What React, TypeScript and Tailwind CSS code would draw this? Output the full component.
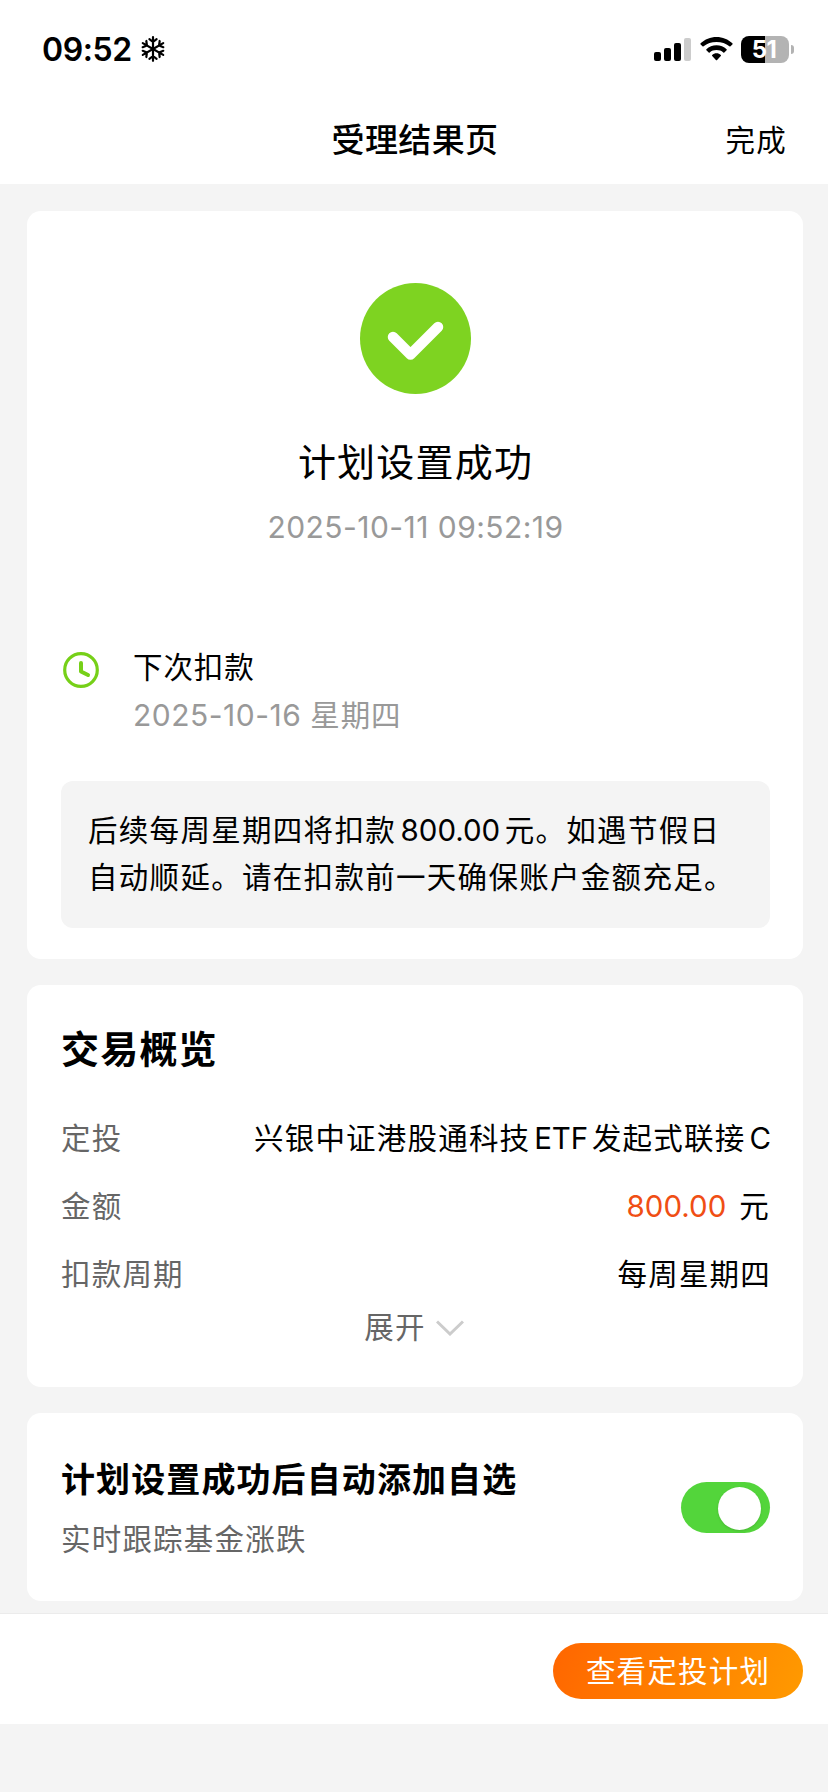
import { useState } from 'react';
import type { ReactNode } from 'react';
import clsx from 'clsx';

function Snowflake() {
  return (
    <svg width="24" height="26" viewBox="-12 -13 24 26" fill="none" stroke="#000" strokeWidth="2.2" strokeLinecap="round">
      {[0, 60, 120, 180, 240, 300].map((deg) => (
        <g key={deg} transform={`rotate(${deg})`}>
          <path d="M0 0V-11.8M0 -7L-3.6 -9.800M0 -7L3.6 -9.800" />
        </g>
      ))}
    </svg>
  );
}

function StatusBar() {
  return (
    <div className="flex h-24 items-start justify-between pr-[34px] pl-[42px]">
      <div className="flex pt-[30px]">
        <span className="w-[99px] text-[32px] leading-10 font-semibold tracking-[-0.4px]">09:52</span>
        <div className="pt-[6px]">
          <Snowflake />
        </div>
      </div>
      <div className="flex items-start pt-9">
        <svg className="mt-[2px]" width="37" height="23" viewBox="0 0 37 23">
          <rect x="0" y="14" width="7" height="9" rx="2" />
          <rect x="10" y="10" width="7" height="13" rx="2" />
          <rect x="20" y="5" width="7" height="18" rx="2" />
          <rect x="30" y="0" width="7" height="23" rx="2" fill="#ccc" />
        </svg>
        <svg className="mt-[1px] ml-[9px]" width="33" height="24" viewBox="0 0 33 24">
          <path d="M16.5 0C10.4 0 4.8 2.4 .6 6.3c-.3.3-.3.8 0 1.1l1.9 1.9c.3.3.8.3 1.1 0C7 6.200 11.500 4.900 16.500 4.900S26 6.200 29.400 9.300c.3.3.8.3 1.100 0l1.900-1.900c.3-.3.3-.8 0-1.100C28.200 2.400 22.600 0 16.500 0z" />
          <path d="M16.500 8.300c-3.900 0-7.400 1.500-10.100 3.900-.3.3-.3.8 0 1.100l2.300 2.200c.3.3.7.3 1 0 1.900-1.700 4.100-2.400 6.800-2.400s4.900.7 6.800 2.400c.3.3.7.3 1 0l2.300-2.200c.3-.3.3-.8 0-1.100-2.700-2.400-6.200-3.900-10.100-3.900z" />
          <path d="M16.500 16.300c-1.700 0-3.200.6-4.300 1.600-.3.3-.3.7 0 1l3.700 4c.3.4.9.4 1.200 0l3.700-4c.3-.3.3-.7 0-1-1.100-1-2.600-1.600-4.300-1.600z" />
        </svg>
        <div className="ml-2 flex h-[27px] w-12 items-center justify-center rounded-[8px] bg-linear-to-r from-black from-50% to-[#b3b3b3] to-50% pr-[2px] text-[24px] leading-none font-bold tracking-[-0.5px] text-white">
          51
        </div>
        <div className="mt-[9px] ml-[2px] h-[9px] w-[3px] rounded-r-full bg-[#b3b3b3]" />
      </div>
    </div>
  );
}

function Row({ label, children }: { label: string; children: ReactNode }) {
  return (
    <div className="flex h-[68px] items-center justify-between">
      <span className="text-[#666]">{label}</span>
      <span>{children}</span>
    </div>
  );
}

export default function App() {
  const [watch, setWatch] = useState(true);

  return (
    <div className="flex h-[1792px] w-[828px] flex-col bg-[#f4f4f4] font-[Inter,'Noto_Sans_CJK_SC',sans-serif] text-[29.5px] tracking-[1.2px] whitespace-nowrap text-black">
      <header className="h-[184px] bg-white">
        <StatusBar />
        <div className="grid h-[90px] grid-cols-3 items-center">
          <h1 className="col-start-2 pl-[2px] text-center text-[33px] font-medium tracking-[0.4px]">受理结果页</h1>
          <button className="mb-[2px] justify-self-end pr-[41px]">完成</button>
        </div>
      </header>

      <main className="pt-[27px] pr-[25px] pl-[27px]">
        {/* Result */}
        <section className="h-[748px] rounded-[14px] bg-white pt-[72px] pr-[33px] pl-[34px]">
          <svg className="mx-auto" width="111" height="111" viewBox="0 0 111 111" fill="none">
            <circle cx="55.5" cy="55.5" r="55.5" fill="#7ed321" />
            <path d="M33 54L50.5 71.5L78 44" stroke="#fff" strokeWidth="10.5" strokeLinecap="round" strokeLinejoin="round" />
          </svg>
          <h2 className="mt-[38px] text-center text-[38px] leading-[60px] tracking-[1.2px]">计划设置成功</h2>
          <p className="mt-[13px] text-center text-[30px] leading-[44px] tracking-[0.45px] text-[#999]">2025-10-11 09:52:19</p>

          <div className="mt-[94px] flex">
            <svg className="mt-[9px] ml-[2px]" width="36" height="36" viewBox="0 0 36 36" fill="none" stroke="#76d018" strokeWidth="3.2">
              <circle cx="18" cy="18" r="16.3" />
              <path d="M18 11v8.500l7 3.500" strokeWidth="4" strokeLinecap="round" strokeLinejoin="round" />
            </svg>
            <div className="ml-[34px] leading-[48px] tracking-[0.9px]">
              <p>下次扣款</p>
              <p className="text-[#999]">
                <span className="text-[30px] tracking-[0.5px]">2025-10-16 </span>星期四
              </p>
            </div>
          </div>

          <div className="mt-[42px] h-[147px] rounded-[12px] bg-[#f4f4f4] px-[27px] pt-[26px] leading-[47px] tracking-[1.3px]">
            <p>
              后续每周星期四将扣款<span className="mx-[4.5px] tracking-normal">800.00</span>元。如遇节假日
            </p>
            <p>自动顺延。请在扣款前一天确保账户金额充足。</p>
          </div>
        </section>

        {/* Overview */}
        <section className="mt-[26px] h-[402px] rounded-[14px] bg-white pt-[34px] pr-[33px] pl-[34px]">
          <h3 className="text-[38px] leading-[60px] font-bold tracking-[1.2px]">交易概览</h3>
          <div className="mt-[25px]">
            <Row label="定投">
              兴银中证港股通科技<span className="mx-1 tracking-[-0.2px]">ETF</span>发起式联接<span className="ml-1 tracking-[-1px]">C</span>
            </Row>
            <Row label="金额">
              <span className="mr-[13px] tracking-normal text-[#f04e14]">800.00</span>元
            </Row>
            <Row label="扣款周期">
              <span className="-mr-px">每周星期四</span>
            </Row>
          </div>
          <button className="mx-auto flex h-[38px] items-center pr-[3px] text-[#666]">
            展开
            <svg className="mt-[2px] ml-[10px]" width="28" height="16" viewBox="0 0 28 16" fill="none" stroke="#ccc" strokeWidth="3">
              <path d="M1 1.500L14 14L27 1.500" />
            </svg>
          </button>
        </section>

        {/* Watchlist */}
        <section className="mt-[26px] flex h-[188px] items-center justify-between rounded-[14px] bg-white pr-[33px] pl-[34px]">
          <div className="pt-1">
            <h3 className="text-[34px] leading-[60px] font-bold tracking-[1.1px]">计划设置成功后自动添加自选</h3>
            <p className="leading-[58px] text-[#666]">实时跟踪基金涨跌</p>
          </div>
          <button
            role="switch"
            aria-checked={watch}
            onClick={() => setWatch(!watch)}
            className={clsx(
              'flex h-[51px] w-[89px] items-center rounded-full px-[9px]',
              watch ? 'justify-end bg-[#53d53b]' : 'justify-start bg-gray-300',
            )}
          >
            <span className="mt-[2px] size-[43px] rounded-full bg-white shadow-sm" />
          </button>
        </section>
      </main>

      <footer className="mt-3 flex h-[111px] items-center justify-end border-t border-[#ebebeb] bg-white pr-[25px]">
        <button className="mt-1 h-14 w-[250px] rounded-full bg-linear-[110deg] from-[#ff6600] to-[#ff9a00] text-white">查看定投计划</button>
      </footer>
    </div>
  );
}
